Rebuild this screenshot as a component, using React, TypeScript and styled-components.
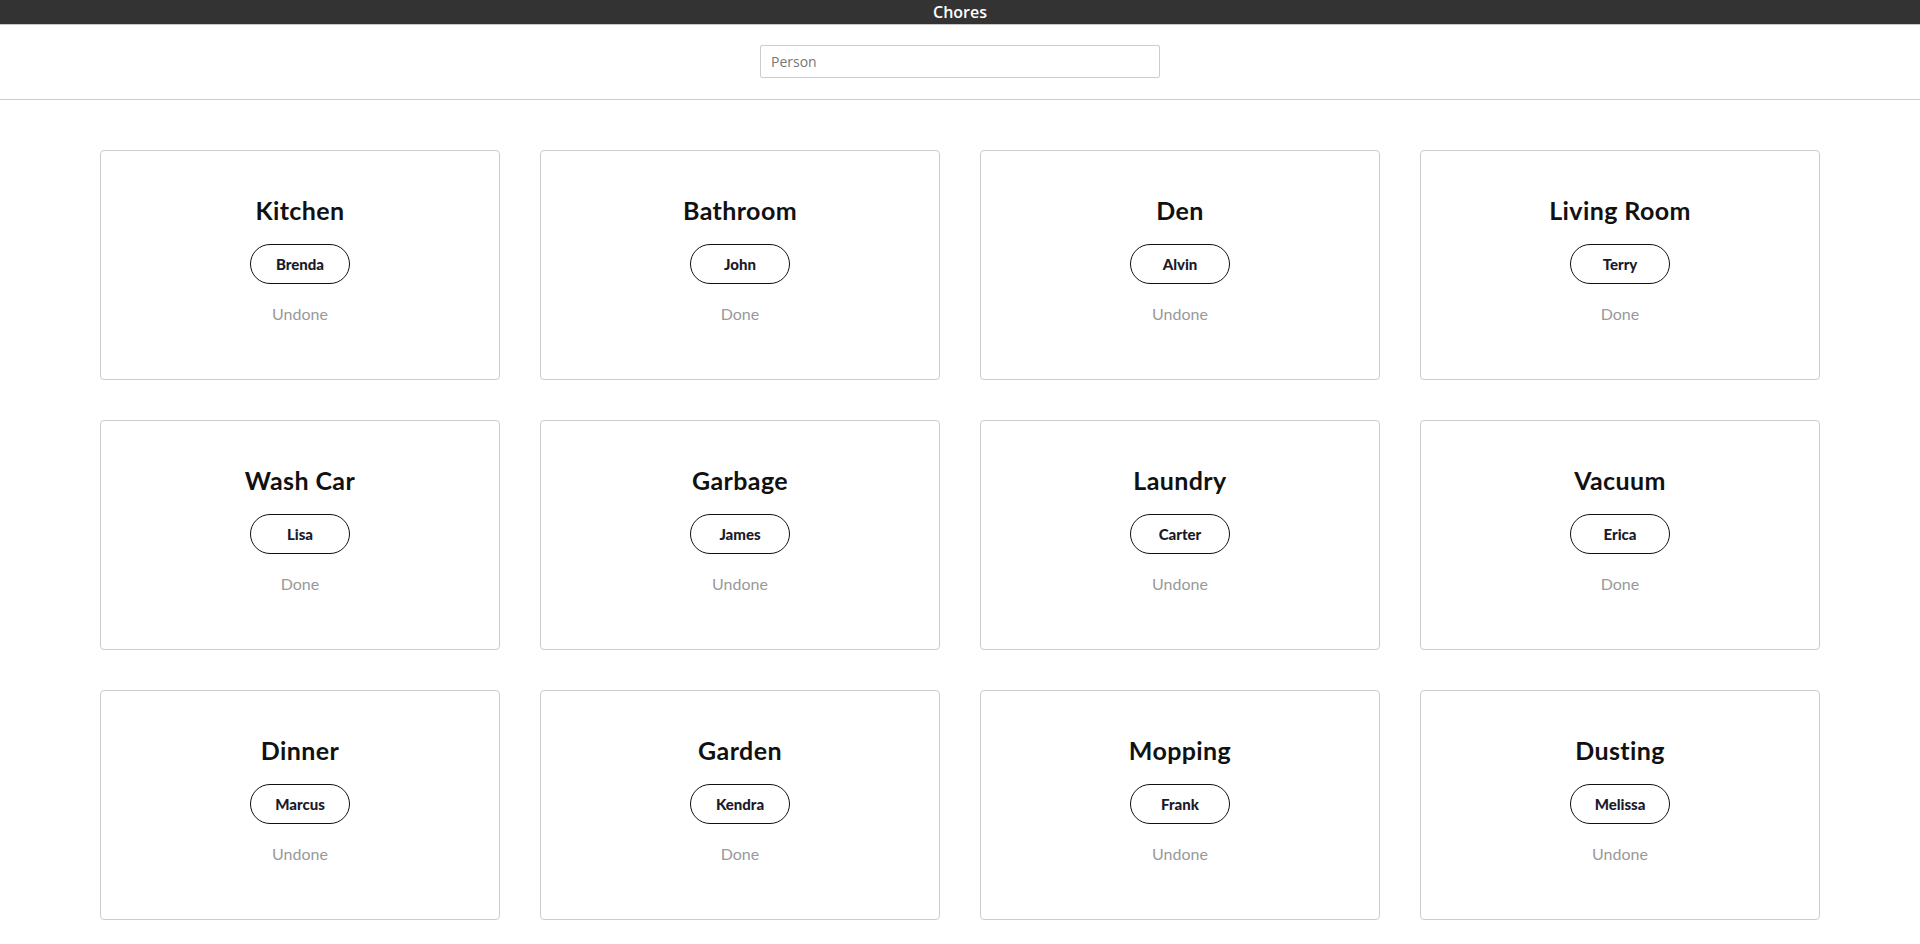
import React from "react";
import styled, { createGlobalStyle } from "styled-components";

const GlobalStyle = createGlobalStyle`
  html, body { margin: 0; padding: 0; background: #fff; }
  body { font-family: "Lato", "Open Sans", sans-serif; color: #111; }
  * { box-sizing: border-box; }
`;

const TopBar = styled.header`
  height: 25px;
  background: #333333;
  color: #fff;
  display: flex;
  align-items: center;
  justify-content: center;
  font-family: "Open Sans", sans-serif;
  font-size: 16px;
  font-weight: 600;
  border-bottom: 1px solid #c8c8c8;
`;

const SearchBar = styled.div`
  display: flex;
  justify-content: center;
  padding: 20px 0 21px;
  border-bottom: 1px solid #cccccc;
`;

const SearchInput = styled.input`
  width: 400px;
  height: 33px;
  border: 1px solid #cccccc;
  border-radius: 2px;
  padding: 0 10px;
  font-family: "Open Sans", sans-serif;
  font-size: 14px;
  color: #333;
  outline: none;
  &::placeholder { color: #777; }
`;

const Grid = styled.main`
  display: grid;
  grid-template-columns: repeat(4, 400px);
  gap: 40px;
  justify-content: center;
  padding: 50px 0 40px;
`;

const Card = styled.div`
  height: 230px;
  border: 1px solid #cccccc;
  border-radius: 4px;
  display: flex;
  flex-direction: column;
  align-items: center;
  padding-top: 44px;
`;

const Title = styled.h2`
  margin: 0;
  font-size: 25px;
  line-height: 30px;
  font-weight: 700;
  letter-spacing: 0.4px;
  color: #111;
`;

const PersonPill = styled.button`
  margin-top: 19px;
  width: 100px;
  height: 40px;
  border: 1px solid #111;
  border-radius: 20px;
  background: #fff;
  font-family: "Lato", sans-serif;
  font-size: 15px;
  font-weight: 900;
  color: #1a1a2a;
  cursor: pointer;
`;

const Status = styled.div`
  margin-top: 20px;
  font-size: 16px;
  line-height: 20px;
  color: #999999;
`;

const chores = [
  { name: "Kitchen", person: "Brenda", done: false },
  { name: "Bathroom", person: "John", done: true },
  { name: "Den", person: "Alvin", done: false },
  { name: "Living Room", person: "Terry", done: true },
  { name: "Wash Car", person: "Lisa", done: true },
  { name: "Garbage", person: "James", done: false },
  { name: "Laundry", person: "Carter", done: false },
  { name: "Vacuum", person: "Erica", done: true },
  { name: "Dinner", person: "Marcus", done: false },
  { name: "Garden", person: "Kendra", done: true },
  { name: "Mopping", person: "Frank", done: false },
  { name: "Dusting", person: "Melissa", done: false },
];

export default function App() {
  return (
    <>
      <GlobalStyle />
      <TopBar>Chores</TopBar>
      <SearchBar>
        <SearchInput placeholder="Person" />
      </SearchBar>
      <Grid>
        {chores.map((c) => (
          <Card key={c.name}>
            <Title>{c.name}</Title>
            <PersonPill>{c.person}</PersonPill>
            <Status>{c.done ? "Done" : "Undone"}</Status>
          </Card>
        ))}
      </Grid>
    </>
  );
}
